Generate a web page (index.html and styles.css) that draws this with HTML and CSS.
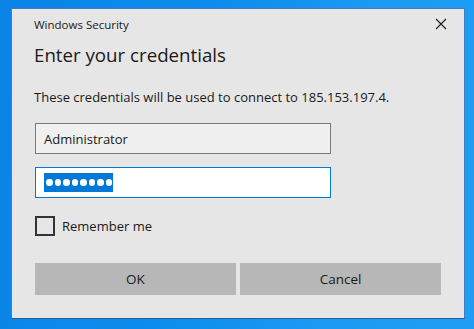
FILE: index.html
```html
<!DOCTYPE html>
<html>
<head>
<meta charset="utf-8">
<link rel="stylesheet" href="styles.css">
</head>
<body>
<div class="desktop">
  <div class="dialog">
    <div class="titlebar">
      <span class="app">Windows Security</span>
      <svg class="close" width="12" height="12" viewBox="0 0 12 12"><path d="M1 1L11 11M11 1L1 11" stroke="#1a1a1a" stroke-width="1.1" fill="none"/></svg>
    </div>
    <h1 class="heading">Enter your credentials</h1>
    <p class="desc">These credentials will be used to connect to 185.153.197.4.</p>
    <div class="field user">Administrator</div>
    <div class="field pass"><span class="sel"><i></i><i></i><i></i><i></i><i></i><i></i><i></i><i></i></span></div>
    <div class="check-row">
      <span class="box"></span>
      <span class="label">Remember me</span>
    </div>
    <div class="buttons">
      <div class="btn">OK</div>
      <div class="btn">Cancel</div>
    </div>
  </div>
</div>
</body>
</html>
```
FILE: styles.css
```css
html, body { margin: 0; padding: 0; }
body { width: 474px; height: 329px; overflow: hidden; font-family: "Open Sans", "Noto Sans", sans-serif; color: #1a1a1a; }
.desktop {
  width: 474px; height: 329px; box-sizing: border-box;
  padding: 8px 0 0 11px;
  background: linear-gradient(100deg, #0a84e6 0%, #0c8cec 40%, #1a9af2 70%, #1f9ef3 100%);
}
.dialog {
  width: 454px; height: 311px; box-sizing: border-box;
  background: #e6e6e6;
  border: 1px solid #3f7fc0;
  border-bottom-color: #2b5f93;
  padding: 0 23px 0 22px;
  display: flex; flex-direction: column;
}
.titlebar { display: flex; justify-content: space-between; align-items: center; height: 30px; margin-top: 0; }
.app { font-size: 11.5px; }
.close { margin-right: -6px; }
.heading { font-weight: normal; font-size: 18.7px; margin: 2px 0 0 0; line-height: 28px; }
.desc { font-size: 13px; margin: 19px 0 0 0; line-height: 18px; }
.field { width: 296px; height: 31px; box-sizing: border-box; border: 1px solid #7a7a7a; background: #f0f0f0; font-size: 13px; padding: 0 0 0 8px; display: flex; align-items: center; margin-left: 1px; }
.user { margin-top: 17px; }
.pass { margin-top: 13px; background: #fff; border-color: #0078d7; }
.sel { background: #0078d7; height: 19px; width: 69px; box-sizing: border-box; display: flex; align-items: center; gap: 2px; padding-left: 2px; }
.sel i { width: 6.5px; height: 6.5px; border-radius: 50%; background: #fff; }
.check-row { display: flex; align-items: center; margin-top: 18px; margin-left: 1px; }
.box { width: 20px; height: 20px; box-sizing: border-box; border: 2px solid #333; }
.label { font-size: 13px; margin-left: 7px; }
.buttons { display: flex; gap: 4px; margin-top: 27px; margin-left: 1px; }
.btn { width: 201px; height: 32px; background: #b7b7b7; font-size: 13.5px; display: flex; align-items: center; justify-content: center; }
```
